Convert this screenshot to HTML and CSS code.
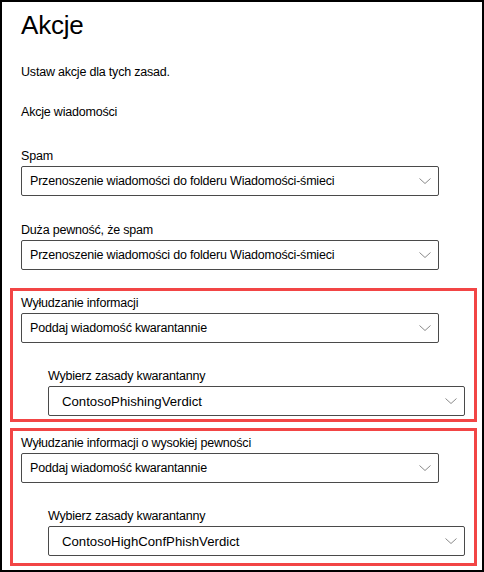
FILE: index.html
```html
<!DOCTYPE html>
<html lang="pl">
<head>
<meta charset="utf-8">
<title>Akcje</title>
<link rel="stylesheet" href="styles.css">
</head>
<body>
<div class="panel">
  <h1 class="title">Akcje</h1>
  <p class="desc">Ustaw akcje dla tych zasad.</p>
  <p class="section">Akcje wiadomości</p>

  <div class="field">
    <div class="label">Spam</div>
    <div class="select"><span class="value">Przenoszenie wiadomości do folderu Wiadomości-śmieci</span><svg class="chev" width="12" height="6" viewBox="0 0 12 6"><path d="M0.5 0.5 L6 5.5 L11.5 0.5" fill="none" stroke="#8a8a8a" stroke-width="1"/></svg></div>
  </div>

  <div class="field">
    <div class="label">Duża pewność, że spam</div>
    <div class="select"><span class="value">Przenoszenie wiadomości do folderu Wiadomości-śmieci</span><svg class="chev" width="12" height="6" viewBox="0 0 12 6"><path d="M0.5 0.5 L6 5.5 L11.5 0.5" fill="none" stroke="#8a8a8a" stroke-width="1"/></svg></div>
  </div>

  <div class="highlight first">
    <div class="label">Wyłudzanie informacji</div>
    <div class="select"><span class="value">Poddaj wiadomość kwarantannie</span><svg class="chev" width="12" height="6" viewBox="0 0 12 6"><path d="M0.5 0.5 L6 5.5 L11.5 0.5" fill="none" stroke="#8a8a8a" stroke-width="1"/></svg></div>
    <div class="nested">
      <div class="label">Wybierz zasady kwarantanny</div>
      <div class="select wide"><span class="value big">ContosoPhishingVerdict</span><svg class="chev" width="12" height="6" viewBox="0 0 12 6"><path d="M0.5 0.5 L6 5.5 L11.5 0.5" fill="none" stroke="#8a8a8a" stroke-width="1"/></svg></div>
    </div>
  </div>

  <div class="highlight second">
    <div class="label">Wyłudzanie informacji o wysokiej pewności</div>
    <div class="select"><span class="value">Poddaj wiadomość kwarantannie</span><svg class="chev" width="12" height="6" viewBox="0 0 12 6"><path d="M0.5 0.5 L6 5.5 L11.5 0.5" fill="none" stroke="#8a8a8a" stroke-width="1"/></svg></div>
    <div class="nested">
      <div class="label">Wybierz zasady kwarantanny</div>
      <div class="select wide"><span class="value big">ContosoHighConfPhishVerdict</span><svg class="chev" width="12" height="6" viewBox="0 0 12 6"><path d="M0.5 0.5 L6 5.5 L11.5 0.5" fill="none" stroke="#8a8a8a" stroke-width="1"/></svg></div>
    </div>
  </div>
</div>
</body>
</html>
```
FILE: styles.css
```css
* { box-sizing: border-box; }
html, body { margin: 0; padding: 0; background: #fff; }
body {
  font-family: "Liberation Sans", Arial, sans-serif;
  color: #000;
}
.panel {
  width: 484px;
  height: 572px;
  border: 2px solid #000;
  padding: 7px 0 0 19px;
  overflow: hidden;
}
.title {
  margin: 0;
  font-size: 26px;
  font-weight: 400;
  line-height: 32px;
  letter-spacing: -0.2px;
}
.desc, .section {
  margin: 0;
  font-size: 12.5px;
  letter-spacing: -0.2px;
  line-height: 16px;
}
.desc { margin-top: 23px; }
.section { margin-top: 24px; }
.field { margin-top: 28px; }
.field + .field { margin-top: 26px; }
.label {
  font-size: 12.5px;
  letter-spacing: -0.2px;
  line-height: 16px;
  margin-bottom: 2px;
}
.select {
  width: 418px;
  height: 30px;
  border: 1px solid #4a4a4a;
  border-radius: 2px;
  display: flex;
  align-items: center;
  justify-content: space-between;
  padding: 0 7px 0 8px;
}
.value {
  font-size: 12.5px;
  letter-spacing: -0.2px;
  white-space: nowrap;
}
.value.big {
  font-size: 13.2px;
  letter-spacing: 0;
  padding-left: 5px;
}
.chev { flex: none; }
.highlight {
  width: 467px;
  margin-left: -11px;
  border: 3px solid #f24545;
  padding: 4px 0 3px 8px;
}
.highlight.first { margin-top: 18px; }
.highlight.second { margin-top: 6px; padding-bottom: 7px; }
.nested {
  margin-top: 25px;
  padding-left: 27px;
}
.select.wide { width: 417px; }
```
